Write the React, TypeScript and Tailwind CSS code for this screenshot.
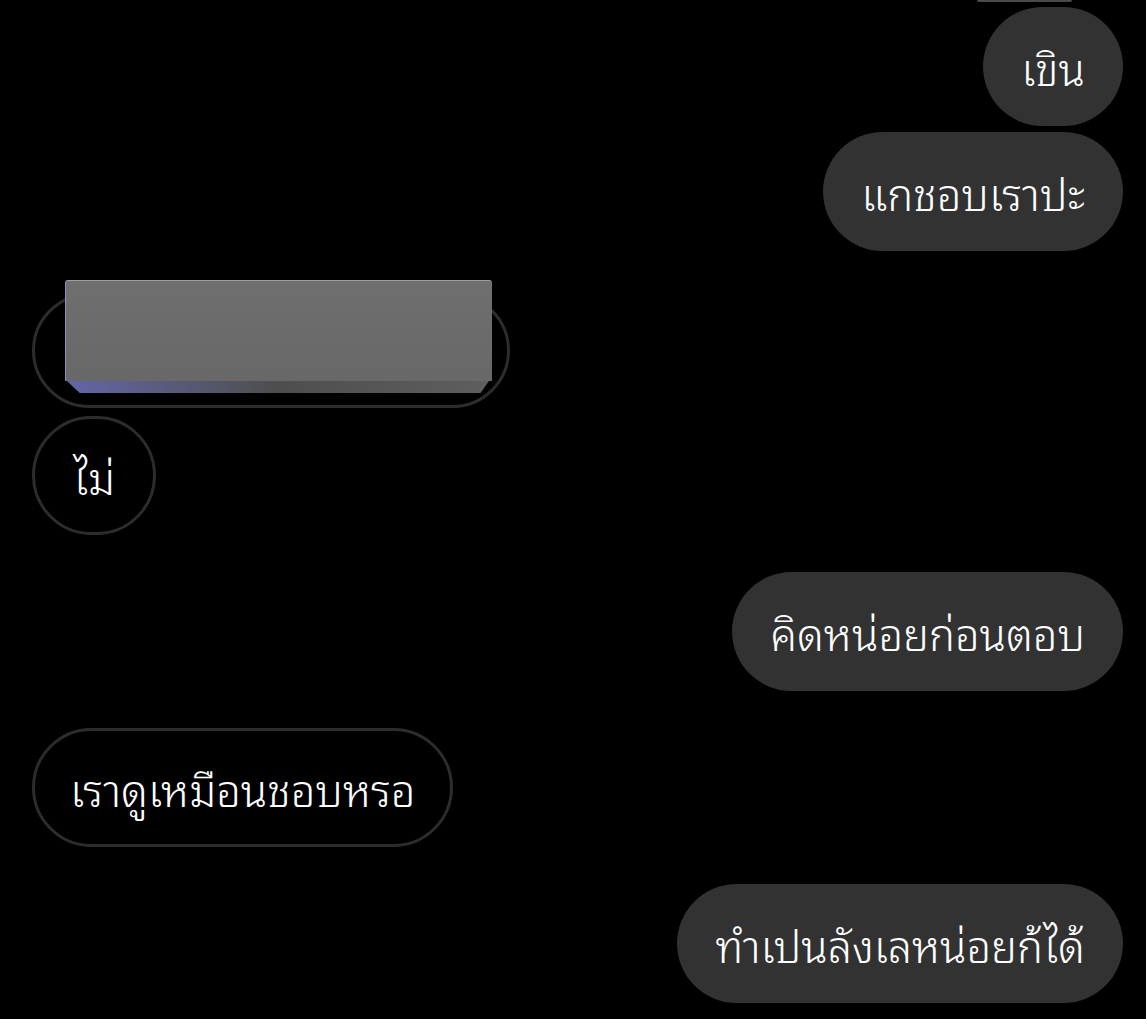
const FONT = { fontFamily: '"Noto Sans Thai Looped", "DejaVu Sans", sans-serif' }

function Mine({ text, className = "" }: { text: string; className?: string }) {
  return (
    <div className={`flex justify-end pr-[23px] ${className}`}>
      <div className="flex h-[119px] items-center rounded-full bg-[#323232] px-[38px] text-[43.5px] font-light text-white">
        {text}
      </div>
    </div>
  )
}

function Theirs({ text, className = "" }: { text: string; className?: string }) {
  return (
    <div className={`flex justify-start pl-[32px] ${className}`}>
      <div className="flex h-[119px] items-center rounded-full border-[3px] border-[#2c2c2c] bg-black px-[35px] text-[43.5px] font-light text-white">
        {text}
      </div>
    </div>
  )
}

function Redacted() {
  return (
    <div className="flex justify-start pl-[32px] pt-[42px]">
      <div className="relative h-[115px] w-[478px] rounded-full border-[3px] border-[#2c2c2c]">
        <div className="absolute left-[30px] top-[-16px] h-[113px] w-[427px]">
          <div className="h-[101px] rounded-t-[3px] border-l border-t border-l-[#8b8cc4] border-t-[#a0a0a0] bg-gradient-to-b from-[#6f6f6f] via-[#6b6b6b] to-[#686868]" />
          <div className="ml-[2px] mr-[3px] h-[12px] bg-gradient-to-r from-[#6465a8] via-[#4e4e4e] to-[#5e5e5e] [clip-path:polygon(0_0,100%_0,98%_100%,3%_100%)]" />
        </div>
      </div>
    </div>
  )
}

export default function App() {
  return (
    <div className="min-h-[1019px] w-[1146px] overflow-hidden bg-black" style={FONT}>
      <div className="flex justify-end pr-[74px]">
        <div className="h-[2px] w-[95px] rounded-b bg-[#4a4a4a]" />
      </div>
      <Mine text="เขิน" className="mt-[5px]" />
      <Mine text="แกชอบเราปะ" className="mt-[6px]" />
      <Redacted />
      <div className="flex justify-start pl-[32px] pt-[8px]">
        <div className="flex h-[119px] w-[124px] items-center justify-center rounded-full border-[3px] border-[#2c2c2c] text-[43.5px] font-light text-white">
          ไม่
        </div>
      </div>
      <Mine text="คิดหน่อยก่อนตอบ" className="mt-[37px]" />
      <Theirs text="เราดูเหมือนชอบหรอ" className="mt-[37px]" />
      <Mine text="ทำเปนลังเลหน่อยก้ได้" className="mt-[37px]" />
    </div>
  )
}
